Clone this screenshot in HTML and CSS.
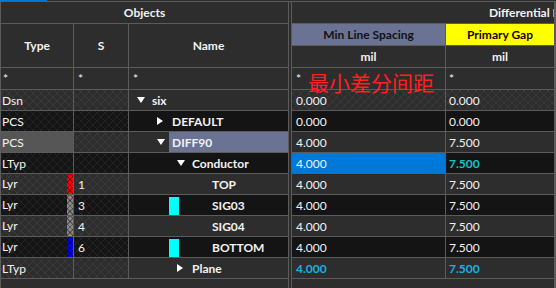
FILE: index.html
```html
<!DOCTYPE html>
<html lang="en">
<head>
    <meta charset="UTF-8">
    <title>Constraint Manager - Differential Pair</title>
    <link rel="stylesheet" href="styles.css">
</head>
<body>
    <div class="topbar"></div>
    <div class="sheet">
        <div class="splitter"></div>

        <!-- group headers -->
        <div class="cell head center bold span3">Objects</div>
        <div class="cell head bold span2 clip">Differential Pair</div>

        <!-- column headers -->
        <div class="cell head center bold tall">Type</div>
        <div class="cell head center bold tall">S</div>
        <div class="cell head center bold tall">Name</div>
        <div class="cell center bold col-min">Min Line Spacing</div>
        <div class="cell center bold col-gap">Primary Gap</div>
        <div class="cell head center bold">mil</div>
        <div class="cell head center bold">mil</div>

        <!-- filter row -->
        <div class="cell head pad-t">*</div>
        <div class="cell head pad-s">*</div>
        <div class="cell head pad-n">*</div>
        <div class="cell head pad-v">*</div>
        <div class="cell head pad-p">*</div>

        <!-- Dsn -->
        <div class="cell g h pad-t1">Dsn</div>
        <div class="cell g h"></div>
        <div class="cell g name lvl0"><span class="arrow"><svg width="8" height="6" viewBox="0 0 8 6"><path d="M0 0H8L4 6Z" fill="#fff"/></svg></span><span class="label">six</span></div>
        <div class="cell g h pad-v">0.000</div>
        <div class="cell g h pad-p">0.000</div>

        <!-- PCS DEFAULT -->
        <div class="cell k h pad-t1">PCS</div>
        <div class="cell k h"></div>
        <div class="cell k name lvl1"><span class="arrow"><svg width="6" height="8" viewBox="0 0 6 8"><path d="M0 0V8L6 4Z" fill="#fff"/></svg></span><span class="label">DEFAULT</span></div>
        <div class="cell k pad-v">0.000</div>
        <div class="cell k pad-p">0.000</div>

        <!-- PCS DIFF90 -->
        <div class="cell sel-type pad-t1">PCS</div>
        <div class="cell g h"></div>
        <div class="cell g name lvl1"><span class="arrow"><svg width="8" height="6" viewBox="0 0 8 6"><path d="M0 0H8L4 6Z" fill="#fff"/></svg></span><span class="label picked">DIFF90</span></div>
        <div class="cell g pad-v">4.000</div>
        <div class="cell g pad-p">7.500</div>

        <!-- LTyp Conductor -->
        <div class="cell k h pad-t1">LTyp</div>
        <div class="cell k h"></div>
        <div class="cell k name lvl2"><span class="arrow"><svg width="8" height="6" viewBox="0 0 8 6"><path d="M0 0H8L4 6Z" fill="#fff"/></svg></span><span class="label">Conductor</span></div>
        <div class="cell active pad-v">4.000</div>
        <div class="cell k pad-p teal bold">7.500</div>

        <!-- Lyr TOP -->
        <div class="cell g h pad-t1 layer">Lyr<span class="bar red"></span></div>
        <div class="cell g h pad-s">1</div>
        <div class="cell g name leaf"><span class="swatch none"></span><span class="label">TOP</span></div>
        <div class="cell g pad-v">4.000</div>
        <div class="cell g pad-p">7.500</div>

        <!-- Lyr SIG03 -->
        <div class="cell k h pad-t1 layer">Lyr<span class="bar gray"></span></div>
        <div class="cell k h pad-s">3</div>
        <div class="cell k name leaf"><span class="swatch"></span><span class="label">SIG03</span></div>
        <div class="cell k pad-v">4.000</div>
        <div class="cell k pad-p">7.500</div>

        <!-- Lyr SIG04 -->
        <div class="cell g h pad-t1 layer">Lyr<span class="bar gray"></span></div>
        <div class="cell g h pad-s">4</div>
        <div class="cell g name leaf"><span class="swatch none"></span><span class="label">SIG04</span></div>
        <div class="cell g pad-v">4.000</div>
        <div class="cell g pad-p">7.500</div>

        <!-- Lyr BOTTOM -->
        <div class="cell k h pad-t1 layer">Lyr<span class="bar blue"></span></div>
        <div class="cell k h pad-s">6</div>
        <div class="cell k name leaf"><span class="swatch"></span><span class="label">BOTTOM</span></div>
        <div class="cell k pad-v">4.000</div>
        <div class="cell k pad-p">7.500</div>

        <!-- LTyp Plane -->
        <div class="cell g h pad-t1">LTyp</div>
        <div class="cell g h"></div>
        <div class="cell g name lvl2"><span class="arrow"><svg width="6" height="8" viewBox="0 0 6 8"><path d="M0 0V8L6 4Z" fill="#fff"/></svg></span><span class="label">Plane</span></div>
        <div class="cell g pad-v cyan bold">4.000</div>
        <div class="cell g pad-p cyan bold">7.500</div>

        <!-- empty area -->
        <div class="cell g span3"></div>
        <div class="cell g span2"></div>
    </div>

    <div class="note">最小差分间距</div>
</body>
</html>
```

FILE: styles.css
```css
body {
    margin: 0;
    background: #2d2d2d;
    font-family: Lato, "Noto Sans", sans-serif;
    font-size: 12px;
    color: #f2f2f2;
    overflow: hidden;
    position: relative;
    width: 556px;
    height: 288px;
}
.topbar {
    height: 1px;
    background: linear-gradient(to right, #0078d7 0 47px, #2d2d2d 47px);
}
.sheet {
    display: grid;
    grid-template-columns: 72px 54px 159px 2px 153px 108px;
    grid-template-rows: 21px 21px 21px 21px repeat(9, 20px) 9px;
    gap: 1px;
    padding: 1px;
    background: #5b5b5b;
}
.splitter {
    grid-column: 4;
    grid-row: 1 / -1;
    background: #2d2d2d;
}
.cell {
    display: flex;
    align-items: center;
    white-space: nowrap;
    overflow: hidden;
    line-height: 16px;
    padding-top: 1px;
}
.head { background: #2d2d2d; }
.center { justify-content: center; }
.bold { font-weight: 700; }
.span3 { grid-column: span 3; }
.span2 { grid-column: span 2; }
.tall { grid-row: span 2; }
.clip { padding-left: 197px; }

.col-min { background: #6b7394; color: #111; }
.col-gap { background: #ffff00; color: #1a0000; }

/* row colours */
.g { background-color: #2d2d2d; }
.k { background-color: #141414; }
.h {
    background-image:
        repeating-linear-gradient(45deg, rgba(255,255,255,0.06) 0 1px, transparent 1px 5.66px),
        repeating-linear-gradient(-45deg, rgba(255,255,255,0.06) 0 1px, transparent 1px 5.66px);
}
.sel-type { background: #565656; }
.active { background: #0078d7; }

.pad-t { padding-left: 2px; }
.pad-t1 { padding-left: 1px; }
.pad-s { padding-left: 4px; }
.pad-n { padding-left: 4px; }
.pad-v { padding-left: 4px; }
.pad-p { padding-left: 3px; }

.teal { color: #12c2cc; }
.cyan { color: #16b2e2; }

/* type colour bars */
.layer { justify-content: space-between; padding-top: 0; }
.bar {
    width: 6px;
    align-self: stretch;
    background-image:
        repeating-linear-gradient(45deg, rgba(0,0,0,0.35) 0 1px, transparent 1px 4px),
        repeating-linear-gradient(-45deg, rgba(0,0,0,0.35) 0 1px, transparent 1px 4px);
}
.bar.red { background-color: #ff0000; }
.bar.gray { background-color: #8a8a8a; }
.bar.blue { background-color: #0000ff; }

/* tree */
.name { font-weight: 700; align-items: stretch; padding-top: 0; }
.name .arrow {
    width: 12px;
    flex: none;
    display: flex;
    align-items: center;
}
.name .label {
    padding-left: 3px;
    padding-top: 1px;
    display: flex;
    align-items: center;
}
.lvl0 { padding-left: 8px; }
.lvl1 { padding-left: 28px; }
.lvl2 { padding-left: 48px; }
.leaf { padding-left: 40px; }
.leaf .label { padding-left: 33px; }
.picked { flex: 1; background: #6b7394; }
.swatch {
    width: 10px;
    height: 18px;
    align-self: flex-end;
    background: #00ffff;
}
.swatch.none { background: none; }

.note {
    position: absolute;
    left: 308px;
    top: 70px;
    font-family: "Noto Sans CJK SC", sans-serif;
    font-size: 21px;
    line-height: 24px;
    color: #ff2020;
}
```
